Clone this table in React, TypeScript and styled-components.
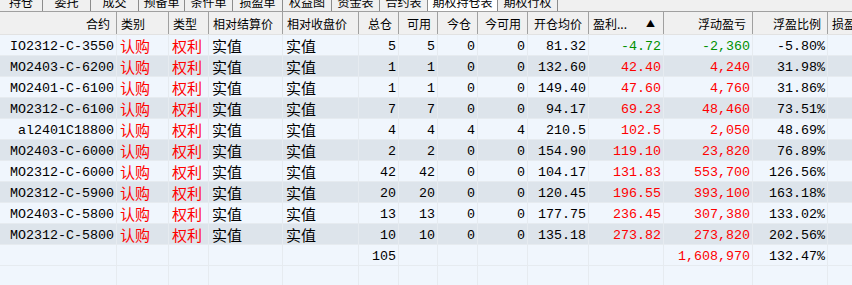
import React from 'react';
import styled, { createGlobalStyle } from 'styled-components';

const GlobalStyle = createGlobalStyle`
  html, body {
    margin: 0;
    padding: 0;
    background: #f0f6fd;
  }
  * {
    box-sizing: border-box;
  }
`;

const COLS = '117px 52px 40px 74px 76px 40px 39px 40px 50px 61px 75px 89px 75px 80px';

const Screen = styled.div`
  width: 852px;
  height: 285px;
  overflow: hidden;
  background: #f0f6fd;
`;

const TabBar = styled.div`
  display: flex;
  height: 12px;
  background: #f0f0f0;
  border-bottom: 1px solid #a0a0a0;
  overflow: hidden;
`;

const Tab = styled.div<{ $w: number; $active?: boolean }>`
  width: ${p => p.$w}px;
  flex: none;
  background: ${p => (p.$active ? '#ffffff' : '#f0f0f0')};
  border-right: 1px solid #8c8c8c;
  text-align: center;
  overflow: hidden;
  font-family: "Noto Sans CJK SC", sans-serif;
  font-size: 12px;
  color: #000;
`;

// the tab strip is scrolled half out of view, only the lower part of the labels shows
const TabLabel = styled.div`
  line-height: 14px;
  margin-top: -5px;
  white-space: nowrap;
`;

const HeaderRow = styled.div`
  display: grid;
  grid-template-columns: ${COLS};
  height: 23px;
  background: #f0f0f0;
  border-bottom: 1px solid #e2e2e2;
`;

const HeadCell = styled.div<{ $align?: 'left' | 'right' }>`
  display: flex;
  align-items: center;
  justify-content: ${p => (p.$align === 'right' ? 'flex-end' : 'flex-start')};
  padding: 1px 6px 0 4px;
  border-right: 1px solid #a0a0a0;
  font-family: "Noto Sans CJK SC", sans-serif;
  font-size: 12px;
  color: #000;
  white-space: nowrap;
  overflow: hidden;
`;

const SortMark = styled.span`
  margin-left: auto;
  font-size: 9px;
  padding-right: 2px;
`;

const DataRow = styled.div<{ $alt?: boolean }>`
  display: grid;
  grid-template-columns: ${COLS};
  height: 21px;
  background: ${p => (p.$alt ? '#dde4eb' : '#f0f6fd')};
  border-bottom: 1px solid #e6ebf0;
`;

type Tone = 'red' | 'green' | 'black';

const toneColor: Record<Tone, string> = {
  red: '#ff0000',
  green: '#009000',
  black: '#000000',
};

const Cell = styled.div<{ $align?: 'left' | 'right'; $tone?: Tone; $cjk?: boolean }>`
  display: flex;
  align-items: center;
  justify-content: ${p => (p.$align === 'left' ? 'flex-start' : 'flex-end')};
  padding: ${p => (p.$cjk ? '1px 2px 0 3px' : '2px 2px 0 0')};
  border-right: 1px solid #e6ebf0;
  color: ${p => toneColor[p.$tone || 'black']};
  font-family: ${p => (p.$cjk ? '"Noto Sans CJK SC", sans-serif' : '"Liberation Mono", monospace')};
  font-size: ${p => (p.$cjk ? '15px' : '13.33px')};
  white-space: nowrap;
  overflow: hidden;
`;

const tabs: [string, number][] = [
  ['持仓', 43],
  ['委托', 48],
  ['成交', 48],
  ['预备单', 46],
  ['条件单', 48],
  ['损盈单', 50],
  ['权益图', 49],
  ['资金表', 48],
  ['合约表', 48],
  ['期权持仓表', 70],
  ['期权行权', 60],
];

const headers: [string, 'left' | 'right'][] = [
  ['合约', 'right'],
  ['类别', 'left'],
  ['类型', 'left'],
  ['相对结算价', 'left'],
  ['相对收盘价', 'left'],
  ['总仓', 'right'],
  ['可用', 'right'],
  ['今仓', 'right'],
  ['今可用', 'right'],
  ['开仓均价', 'right'],
  ['盈利...', 'left'],
  ['浮动盈亏', 'right'],
  ['浮盈比例', 'right'],
  ['损盈', 'left'],
];

type Position = {
  code: string;
  total: number;
  avail: number;
  today: number;
  todayAvail: number;
  open: string;
  profit: string;
  floating: string;
  ratio: string;
};

const positions: Position[] = [
  { code: 'IO2312-C-3550', total: 5, avail: 5, today: 0, todayAvail: 0, open: '81.32', profit: '-4.72', floating: '-2,360', ratio: '-5.80%' },
  { code: 'MO2403-C-6200', total: 1, avail: 1, today: 0, todayAvail: 0, open: '132.60', profit: '42.40', floating: '4,240', ratio: '31.98%' },
  { code: 'MO2401-C-6100', total: 1, avail: 1, today: 0, todayAvail: 0, open: '149.40', profit: '47.60', floating: '4,760', ratio: '31.86%' },
  { code: 'MO2312-C-6100', total: 7, avail: 7, today: 0, todayAvail: 0, open: '94.17', profit: '69.23', floating: '48,460', ratio: '73.51%' },
  { code: 'al2401C18800', total: 4, avail: 4, today: 4, todayAvail: 4, open: '210.5', profit: '102.5', floating: '2,050', ratio: '48.69%' },
  { code: 'MO2403-C-6000', total: 2, avail: 2, today: 0, todayAvail: 0, open: '154.90', profit: '119.10', floating: '23,820', ratio: '76.89%' },
  { code: 'MO2312-C-6000', total: 42, avail: 42, today: 0, todayAvail: 0, open: '104.17', profit: '131.83', floating: '553,700', ratio: '126.56%' },
  { code: 'MO2312-C-5900', total: 20, avail: 20, today: 0, todayAvail: 0, open: '120.45', profit: '196.55', floating: '393,100', ratio: '163.18%' },
  { code: 'MO2403-C-5800', total: 13, avail: 13, today: 0, todayAvail: 0, open: '177.75', profit: '236.45', floating: '307,380', ratio: '133.02%' },
  { code: 'MO2312-C-5800', total: 10, avail: 10, today: 0, todayAvail: 0, open: '135.18', profit: '273.82', floating: '273,820', ratio: '202.56%' },
];

const App = () => {
  return (
    <Screen>
      <GlobalStyle />
      <TabBar>
        {tabs.map(([label, w]) => (
          <Tab key={label} $w={w} $active={label === '期权持仓表'}>
            <TabLabel>{label}</TabLabel>
          </Tab>
        ))}
      </TabBar>

      <HeaderRow>
        {headers.map(([label, align]) => (
          <HeadCell key={label} $align={align}>
            {label}
            {label === '盈利...' && <SortMark>▲</SortMark>}
          </HeadCell>
        ))}
      </HeaderRow>

      {positions.map((p, i) => {
        const tone: Tone = p.profit.startsWith('-') ? 'green' : 'red';
        return (
          <DataRow key={p.code} $alt={i % 2 === 1}>
            <Cell>{p.code}</Cell>
            <Cell $cjk $align="left" $tone="red">认购</Cell>
            <Cell $cjk $align="left" $tone="red">权利</Cell>
            <Cell $cjk $align="left">实值</Cell>
            <Cell $cjk $align="left">实值</Cell>
            <Cell>{p.total}</Cell>
            <Cell>{p.avail}</Cell>
            <Cell>{p.today}</Cell>
            <Cell>{p.todayAvail}</Cell>
            <Cell>{p.open}</Cell>
            <Cell $tone={tone}>{p.profit}</Cell>
            <Cell $tone={tone}>{p.floating}</Cell>
            <Cell>{p.ratio}</Cell>
            <Cell />
          </DataRow>
        );
      })}

      <DataRow>
        <Cell />
        <Cell />
        <Cell />
        <Cell />
        <Cell />
        <Cell>105</Cell>
        <Cell />
        <Cell />
        <Cell />
        <Cell />
        <Cell />
        <Cell $tone="red">1,608,970</Cell>
        <Cell>132.47%</Cell>
        <Cell />
      </DataRow>

      <DataRow>
        {headers.map(([label]) => (
          <Cell key={label} />
        ))}
      </DataRow>
    </Screen>
  );
};

export default App;
